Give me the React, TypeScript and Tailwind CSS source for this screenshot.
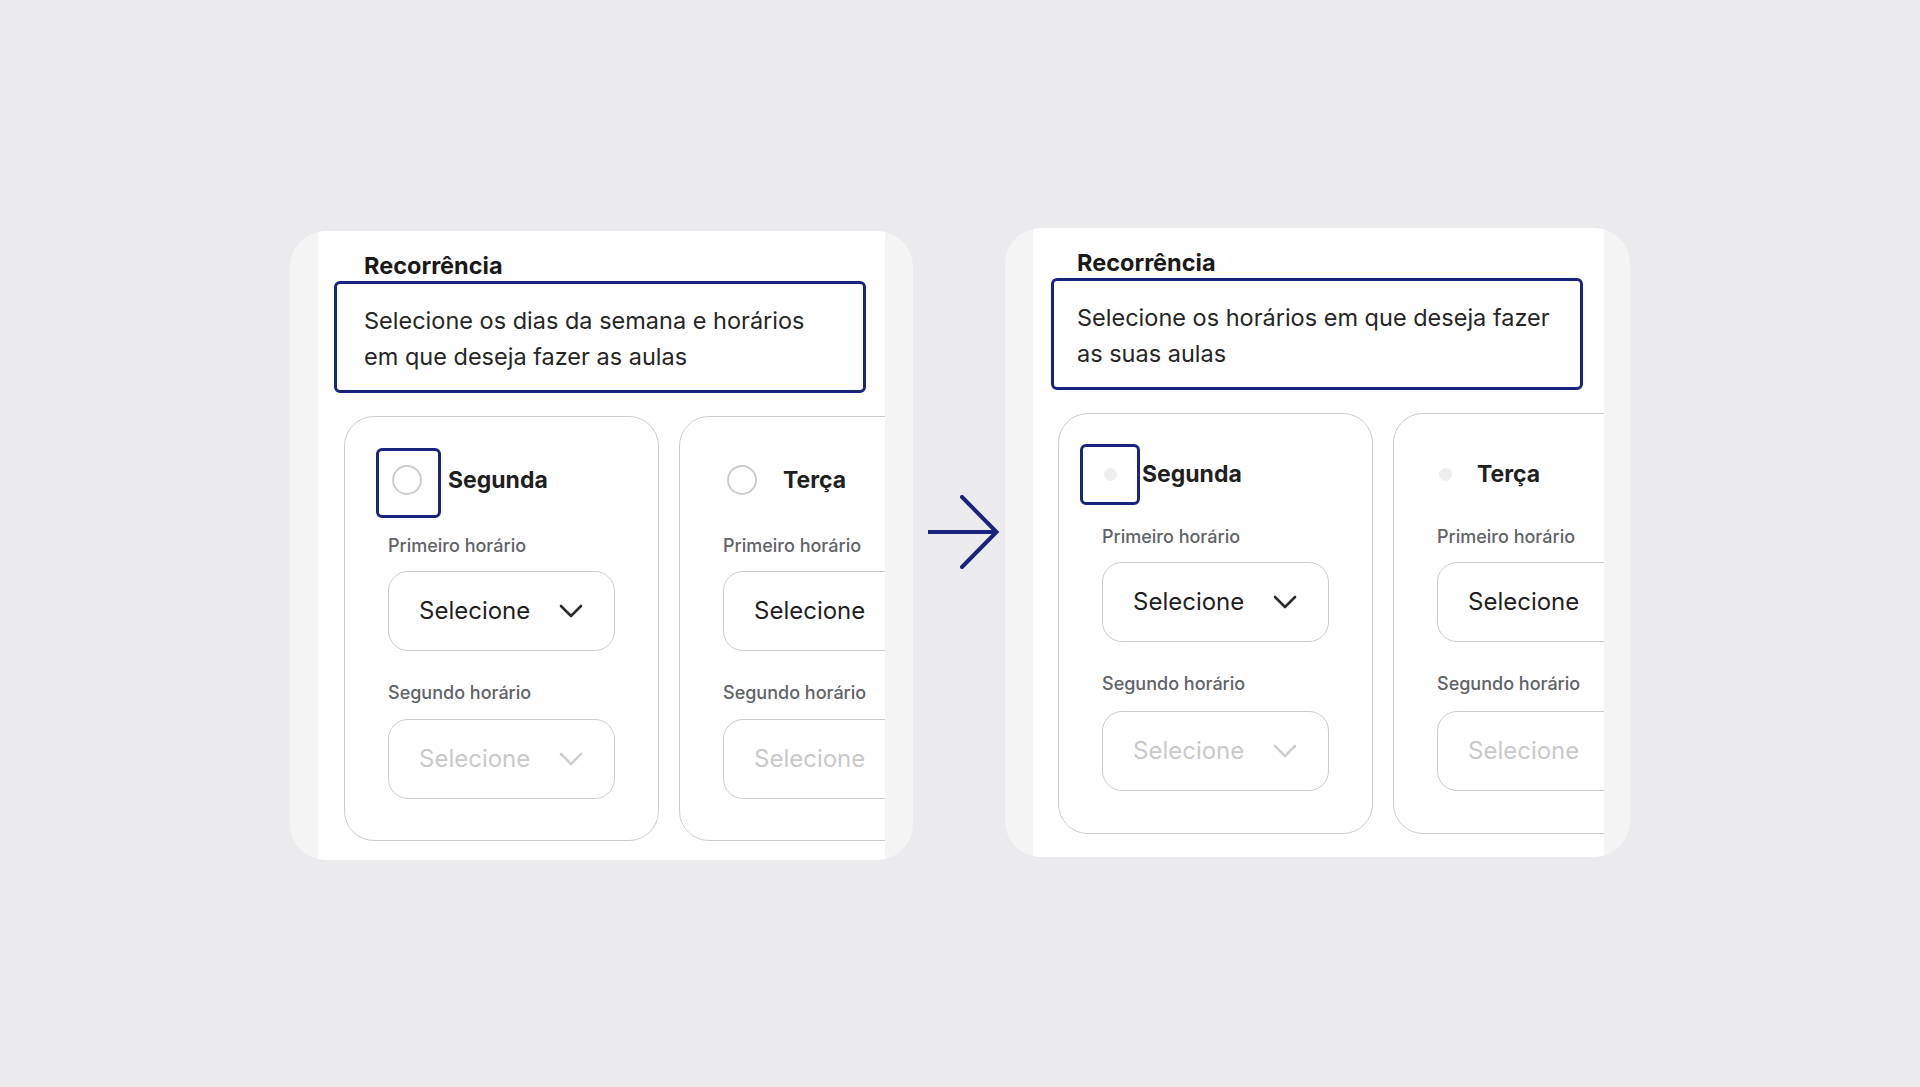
import React from "react";

type Variant = "before" | "after";

const Chevron = ({ muted }: { muted?: boolean }) => (
  <svg width="24" height="14" viewBox="0 0 24 14" fill="none">
    <path
      d="M2 2l10 10L22 2"
      stroke={muted ? "#cfcfcf" : "#2b2b2b"}
      strokeWidth="2.6"
      strokeLinecap="round"
      strokeLinejoin="round"
    />
  </svg>
);

const SelectBox = ({ muted, chevron }: { muted?: boolean; chevron?: boolean }) => (
  <div className="w-[227px] h-[80px] shrink-0 rounded-[20px] border border-[#cccccc] flex items-center justify-between pl-[30px] pr-[31px]">
    <span
      className={
        "text-[24px] leading-[30px] whitespace-nowrap " +
        (muted ? "text-[#c9c9c9]" : "text-[#1f1f1f]")
      }
    >
      Selecione
    </span>
    {chevron && <Chevron muted={muted} />}
  </div>
);

const DayCard = ({
  day,
  focused,
  variant,
}: {
  day: string;
  focused?: boolean;
  variant: Variant;
}) => {
  const after = variant === "after";
  return (
    <div
      className={
        "w-[315px] shrink-0 rounded-[30px] border border-[#cccccc] bg-white " +
        (after ? "h-[421px] pt-[45px]" : "h-[425px] pt-[48px]")
      }
    >
      {/* DAY HEADER */}
      {after ? (
        <div className="h-[30px] flex items-center pl-[45px]">
          <div className="relative w-[13px] h-[13px] rounded-full bg-[#eeeeee]">
            {focused && (
              <div className="absolute left-[-24px] top-[-24px] w-[60px] h-[61px] rounded-[6px] border-[3px] border-[#1a237e]" />
            )}
          </div>
          <span className="ml-[25px] text-[23px] leading-[30px] font-bold text-[#1f1f1f]">
            {day}
          </span>
        </div>
      ) : (
        <div className="h-[30px] flex items-center pl-[47px]">
          <div className="relative w-[30px] h-[30px] rounded-full border-2 border-[#cccccc]">
            {focused && (
              <div className="absolute left-[-18px] top-[-19px] w-[65px] h-[70px] rounded-[6px] border-[3px] border-[#1a237e]" />
            )}
          </div>
          <span className="ml-[26px] text-[23px] leading-[30px] font-bold text-[#1f1f1f]">
            {day}
          </span>
        </div>
      )}

      {/* TIMES */}
      <div className="pl-[43px]">
        <p
          className={
            "text-[18px] leading-[20px] font-medium text-[#606367] whitespace-nowrap " +
            (after ? "mt-[38px]" : "mt-[41px]")
          }
        >
          Primeiro horário
        </p>
        <div className={after ? "mt-[15px]" : "mt-[15px]"}>
          <SelectBox chevron={day === "Segunda"} />
        </div>
        <p className="mt-[32px] text-[18px] leading-[20px] font-medium text-[#606367] whitespace-nowrap">
          Segundo horário
        </p>
        <div className={after ? "mt-[17px]" : "mt-[16px]"}>
          <SelectBox muted chevron={day === "Segunda"} />
        </div>
      </div>
    </div>
  );
};

const Panel = ({ variant }: { variant: Variant }) => {
  const after = variant === "after";
  return (
    <div
      className={
        "h-[629px] shrink-0 rounded-[36px] bg-[#f4f4f4] overflow-hidden " +
        (after ? "w-[625px] pl-[28px] pr-[26px]" : "w-[623px] px-[28px] mt-[3px]")
      }
    >
      <div className="h-full bg-white overflow-hidden pt-[21px]">
        <h2
          className={
            "text-[23.5px] leading-[28px] font-bold text-[#1a1a1a] " +
            (after ? "pl-[44px]" : "pl-[46px]")
          }
        >
          Recorrência
        </h2>
        <div
          className={
            "mt-[1px] w-[532px] border-[3px] border-[#1a237e] rounded-[6px] pt-[19px] pb-[15px] text-[23.5px] leading-[36px] text-[#262626] whitespace-nowrap " +
            (after ? "ml-[18px] pl-[23px]" : "ml-[16px] pl-[27px]")
          }
        >
          {after ? (
            <>
              Selecione os horários em que deseja fazer
              <br />
              as suas aulas
            </>
          ) : (
            <>
              Selecione os dias da semana e horários
              <br />
              em que deseja fazer as aulas
            </>
          )}
        </div>
        <div
          className={
            "flex gap-[20px] mt-[23px] " + (after ? "ml-[25px]" : "ml-[26px]")
          }
        >
          <DayCard day="Segunda" focused variant={variant} />
          <DayCard day="Terça" variant={variant} />
        </div>
      </div>
    </div>
  );
};

export default function App() {
  return (
    <div
      className="w-full h-[1087px] bg-[#ebebed] flex items-start pl-[290px] pt-[228px] overflow-hidden"
      style={{ fontFamily: "Inter, 'Noto Sans', sans-serif" }}
    >
      {/* BEFORE */}
      <Panel variant="before" />
      {/* ARROW */}
      <div className="ml-[14px] mr-[1px] mt-[267px] w-[77px] h-[74px] shrink-0">
        <svg width="74" height="74" viewBox="0 0 74 74" fill="none">
          <path d="M1 37H70" stroke="#1a237e" strokeWidth="4" />
          <path
            d="M35 2L69.5 37L35 72"
            stroke="#1a237e"
            strokeWidth="4"
            strokeLinecap="round"
            strokeLinejoin="miter"
          />
        </svg>
      </div>
      {/* AFTER */}
      <Panel variant="after" />
    </div>
  );
}
